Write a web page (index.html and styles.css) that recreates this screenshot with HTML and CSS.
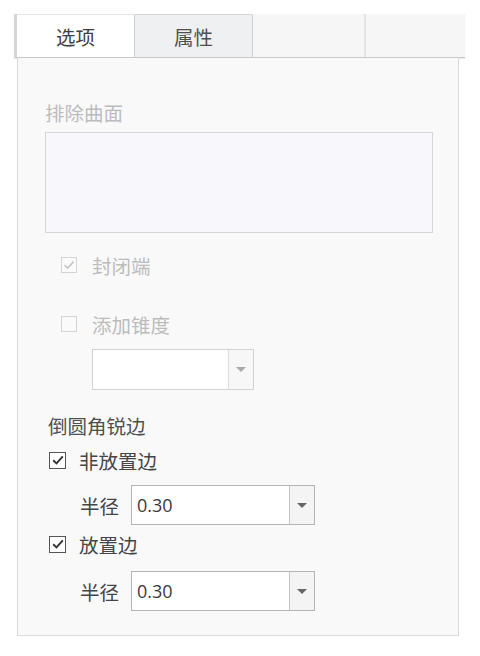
FILE: index.html
```html
<!DOCTYPE html>
<html lang="zh">
<head>
<meta charset="utf-8">
<link rel="stylesheet" href="styles.css">
</head>
<body>
<div class="wrap">
  <div class="tabs">
    <div class="tab tab-active">选项</div>
    <div class="tab tab-second">属性</div>
    <div class="tab-fill"></div>
    <div class="tab-end"></div>
  </div>
  <div class="panel">
    <div class="label disabled">排除曲面</div>
    <div class="listbox"></div>

    <div class="check-row disabled row-close">
      <span class="box box-disabled">
        <svg viewBox="0 0 16 16" width="16" height="16"><path d="M3.5 8.2 L6.6 11.2 L12.6 4.6" fill="none" stroke="#c4c4c4" stroke-width="1.6"/></svg>
      </span>
      <span class="check-text">封闭端</span>
    </div>

    <div class="check-row disabled row-taper">
      <span class="box box-disabled"></span>
      <span class="check-text">添加锥度</span>
    </div>

    <div class="combo combo-disabled">
      <div class="combo-value"></div>
      <div class="combo-btn"><span class="arrow"></span></div>
    </div>

    <div class="label section">倒圆角锐边</div>

    <div class="check-row row-a">
      <span class="box">
        <svg viewBox="0 0 16 16" width="16" height="16"><path d="M3.2 8.2 L6.5 11.4 L12.8 4.4" fill="none" stroke="#333" stroke-width="1.9"/></svg>
      </span>
      <span class="check-text">非放置边</span>
    </div>
    <div class="field-row row-r1">
      <span class="field-label">半径</span>
      <div class="combo">
        <div class="combo-value">0.30</div>
        <div class="combo-btn"><span class="arrow"></span></div>
      </div>
    </div>

    <div class="check-row row-b">
      <span class="box">
        <svg viewBox="0 0 16 16" width="16" height="16"><path d="M3.2 8.2 L6.5 11.4 L12.8 4.4" fill="none" stroke="#333" stroke-width="1.9"/></svg>
      </span>
      <span class="check-text">放置边</span>
    </div>
    <div class="field-row row-r2">
      <span class="field-label">半径</span>
      <div class="combo">
        <div class="combo-value">0.30</div>
        <div class="combo-btn"><span class="arrow"></span></div>
      </div>
    </div>
  </div>
</div>
</body>
</html>
```
FILE: styles.css
```css
html, body {
  margin: 0;
  padding: 0;
  background: #ffffff;
}
body {
  font-family: "Noto Sans CJK SC", "Noto Sans", sans-serif;
  font-size: 18px;
  color: #4a4a4a;
}
.wrap {
  padding: 14px 0 0 14px;
  width: 451px;
}
.tabs {
  display: flex;
  height: 43px;
  background: #f6f6f6;
  border-left: 3px solid #d6d6d6;
  border-bottom: 1px solid #c8c8c8;
  box-shadow: 0 1px 1px rgba(0,0,0,0.08);
}
.tab {
  display: flex;
  align-items: center;
  justify-content: center;
  font-size: 19.5px;
  color: #404040;
  box-sizing: border-box;
}
.tab-active {
  width: 118px;
  background: #ffffff;
  border-right: 1px solid #d0d0d0;
  border-top: 1px solid #e4e4e4;
}
.tab-second {
  width: 118px;
  background: #eef0f1;
  border-right: 1px solid #cfcfcf;
  border-top: 1px solid #d8d8d8;
  color: #505050;
}
.tab-fill {
  width: 111px;
  border-right: 2px solid #e4e4e4;
}
.tab-end {
  flex: 1;
}
.panel {
  margin-left: 3px;
  width: 442px;
  height: 578px;
  box-sizing: border-box;
  background: #f9f9f9;
  border: 1px solid #dadada;
  border-top: none;
  padding: 43px 0 0 27px;
}
.label {
  font-size: 19.5px;
  line-height: 24px;
  height: 24px;
}
.disabled {
  color: #bcbcbc;
}
.listbox {
  margin-top: 7px;
  width: 388px;
  height: 101px;
  box-sizing: border-box;
  border: 1px solid #d6d6d6;
  background: #f8f7fc;
}
.check-row {
  display: flex;
  align-items: center;
  height: 24px;
  font-size: 19.5px;
}
.row-close {
  margin-top: 20px;
  margin-left: 16px;
}
.row-taper {
  margin-top: 35px;
  margin-left: 16px;
}
.box {
  width: 16px;
  height: 16px;
  box-sizing: border-box;
  border: 1px solid #555;
  background: #fff;
  display: flex;
  align-items: center;
  justify-content: center;
  flex: none;
}
.box svg {
  display: block;
  flex: none;
}
.box-disabled {
  border-color: #d4d4d4;
  background: #fafafa;
}
.row-close .check-text,
.row-taper .check-text {
  margin-left: 15px;
}
.combo {
  display: flex;
  width: 184px;
  height: 40px;
  box-sizing: border-box;
  border: 1px solid #b4b4b4;
  background: #ffffff;
}
.combo-disabled {
  margin-top: 13px;
  margin-left: 47px;
  width: 162px;
  height: 41px;
  border-color: #d2d2d2;
}
.combo-value {
  flex: 1;
  font-family: "Open Sans", "Noto Sans", sans-serif;
  font-size: 18px;
  color: #3a3a3a;
  line-height: 38px;
  padding-left: 5px;
}
.combo-btn {
  width: 24px;
  border-left: 1px solid #c4c4c4;
  background: #f4f4f4;
  display: flex;
  align-items: center;
  justify-content: center;
}
.combo-disabled .combo-btn {
  border-left-color: #dcdcdc;
  background: #f7f7f7;
}
.arrow {
  width: 0;
  height: 0;
  border-left: 5px solid transparent;
  border-right: 5px solid transparent;
  border-top: 5px solid #666;
}
.combo-disabled .arrow {
  border-top-color: #a9a9a9;
}
.section {
  margin-top: 24px;
  margin-left: 3px;
  color: #505050;
}
.row-a {
  margin-top: 10px;
  margin-left: 4px;
}
.row-b {
  margin-top: 7px;
  margin-left: 4px;
}
.row-a .check-text,
.row-b .check-text {
  margin-left: 13px;
  color: #454545;
}
.box:not(.box-disabled) {
  width: 17px;
  height: 17px;
}
.field-row {
  display: flex;
  align-items: center;
  margin-left: 35px;
}
.row-r1 {
  margin-top: 13px;
}
.row-r2 {
  margin-top: 15px;
}
.field-label {
  font-size: 19.5px;
  color: #454545;
  width: 51px;
}
```
